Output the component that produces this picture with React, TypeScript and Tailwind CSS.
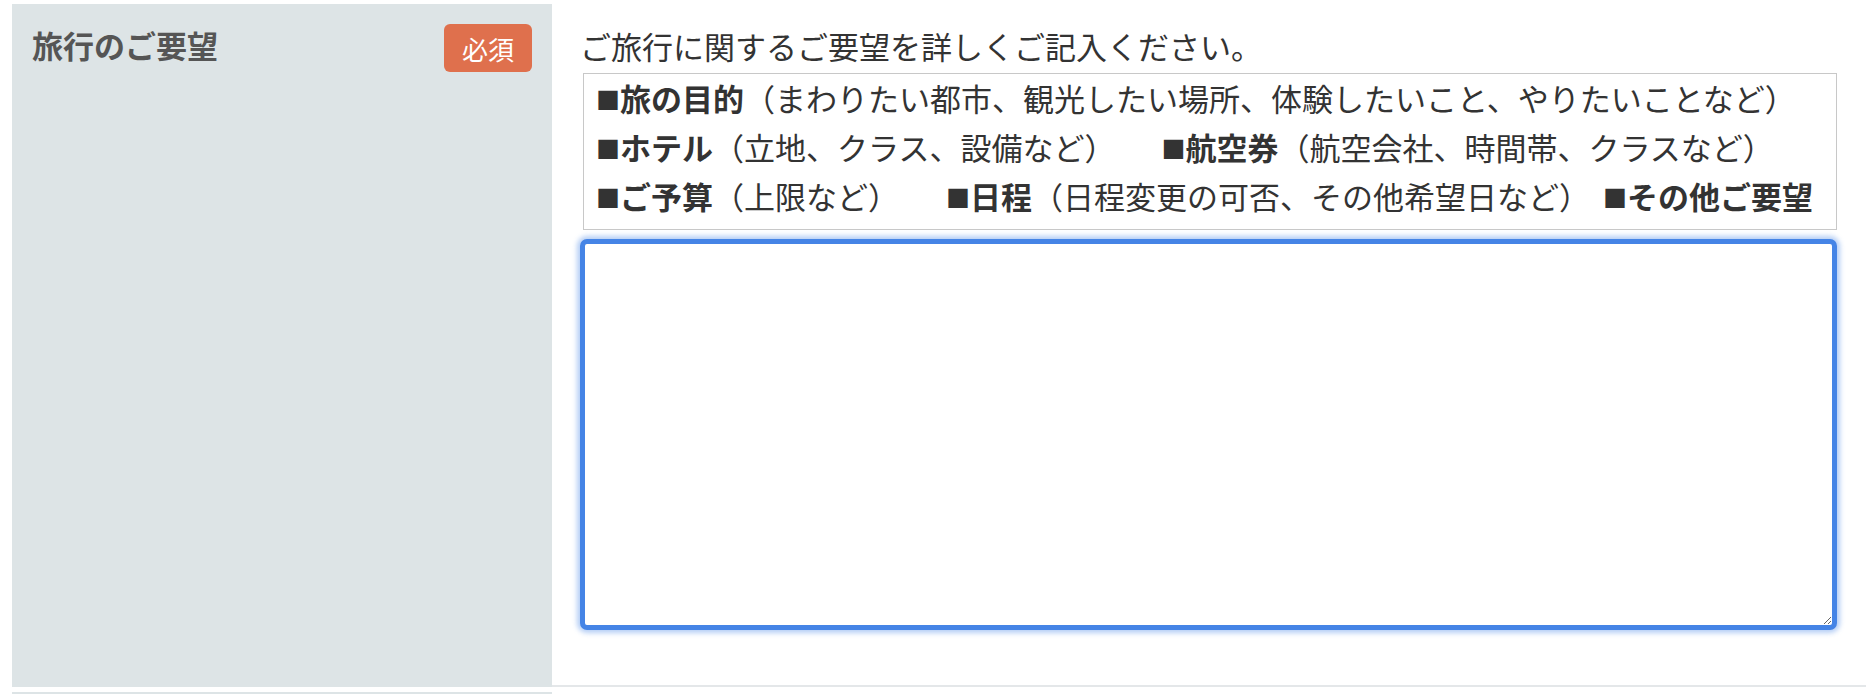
const jp = "font-['Noto_Sans_CJK_JP','Noto_Sans',sans-serif]";

function Item({ title, note, className = "" }: { title: string; note?: string; className?: string }) {
  return (
    <span className={`flex items-center ${className}`}>
      <span className="inline-block w-[24px] text-[24px] leading-none">■</span>
      <span className="font-bold">{title}</span>
      {note && <span>（{note}）</span>}
    </span>
  );
}

export default function App() {
  return (
    <div className={`min-h-screen bg-white pl-[12px] pt-[4px] text-[#333] ${jp}`}>
      <div className="flex">
        {/* label cell */}
        <div className="w-[540px] shrink-0 bg-[#dde4e6] p-[20px]">
          <div className="flex items-start justify-between">
            <h2 className="text-[31px] leading-[42px] font-bold text-[#555]">旅行のご要望</h2>
            <span className="flex h-[48px] w-[88px] items-center justify-center rounded-[6px] bg-[#df704d] text-[26px] font-normal text-white">
              必須
            </span>
          </div>
        </div>

        {/* input cell */}
        <div className="flex-1 border-b-2 border-[#e4e7e9] pl-[28px] pr-[29px] pt-[18px] pb-[55px]">
          <p className="text-[31px] leading-[48px]">ご旅行に関するご要望を詳しくご記入ください。</p>
          <div className="ml-[3px] mt-[3px] border border-[#c8c8c8] pl-[12px] pb-[8px] text-[31px] whitespace-nowrap">
            <div className="flex h-[49px] items-center">
              <Item title="旅の目的" note="まわりたい都市、観光したい場所、体験したいこと、やりたいことなど" />
            </div>
            <div className="flex h-[49px] items-center">
              <Item title="ホテル" note="立地、クラス、設備など" />
              <Item className="ml-[46px]" title="航空券" note="航空会社、時間帯、クラスなど" />
            </div>
            <div className="flex h-[49px] items-center">
              <Item title="ご予算" note="上限など" />
              <Item className="ml-[47px]" title="日程" note="日程変更の可否、その他希望日など" />
              <Item className="ml-[13px]" title="その他ご要望" />
            </div>
          </div>
          <textarea
            className="mt-[9px] block h-[391px] w-full resize rounded-[7px] border-[5px] border-[#4584e6] bg-white p-2 text-[30px] outline-none shadow-[0_0_5px_3px_rgba(69,132,230,0.4)]"
            defaultValue=""
          />
        </div>
      </div>
      <div className="mt-[5px] flex">
        <div className="h-[2px] w-[540px] shrink-0 bg-[#dde4e6]" />
        <div className="flex-1" />
      </div>
    </div>
  );
}
